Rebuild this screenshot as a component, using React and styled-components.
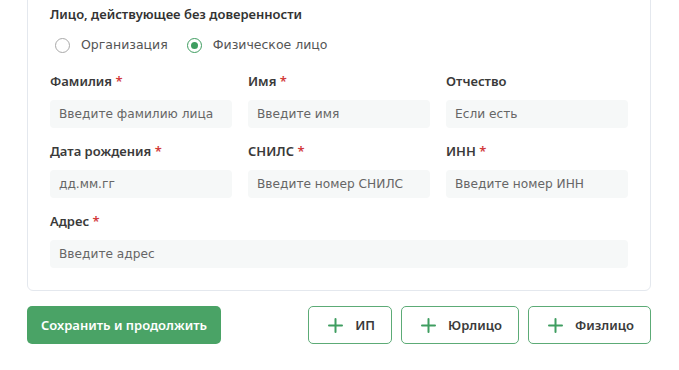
import React, { useState } from "react";
import styled, { createGlobalStyle } from "styled-components";

const GlobalStyle = createGlobalStyle`
  body {
    margin: 0;
    background: #fff;
    font-family: "DejaVu Sans", "Noto Sans", sans-serif;
    color: #333;
    overflow: hidden;
  }
  * { box-sizing: border-box; }
`;

const strong = `"Noto Sans", "DejaVu Sans", sans-serif`;

const Page = styled.main`
  padding: 0 28px 0 27px;
`;

const Card = styled.section`
  margin-top: -12px;
  border: 1px solid #e4e8ee;
  border-radius: 6px;
  padding: 16px 22px 22px 22px;
`;

const Title = styled.h3`
  margin: 0;
  font-family: ${strong};
  font-size: 13px;
  line-height: 18px;
  font-weight: 600;
  color: #333;
`;

const RadioRow = styled.div`
  display: flex;
  align-items: center;
  gap: 19px;
  margin: 13px 0 18px 5px;
`;

const RadioLabel = styled.label`
  display: flex;
  align-items: center;
  gap: 11px;
  font-size: 12.5px;
  line-height: 18px;
  color: #555;
  cursor: pointer;
`;

const Circle = styled.span`
  width: 15px;
  height: 15px;
  border-radius: 50%;
  border: 1.5px solid ${(p) => (p.$checked ? "#3f9d60" : "#a9a9a9")};
  display: flex;
  align-items: center;
  justify-content: center;
  &::after {
    content: "";
    width: 7px;
    height: 7px;
    border-radius: 50%;
    background: ${(p) => (p.$checked ? "#3f9d60" : "transparent")};
  }
`;

const Grid = styled.div`
  display: grid;
  grid-template-columns: repeat(3, 1fr);
  column-gap: 16px;
  row-gap: 14px;
`;

const Field = styled.div`
  display: flex;
  flex-direction: column;
  gap: 10px;
  grid-column: ${(p) => (p.$wide ? "1 / -1" : "auto")};
`;

const Label = styled.span`
  font-family: ${strong};
  font-size: 13px;
  line-height: 18px;
  font-weight: 600;
  color: #3a3a3a;
`;

const Star = styled.span`
  color: #d23a3a;
`;

const Input = styled.input`
  height: 28px;
  border: none;
  outline: none;
  border-radius: 4px;
  background: #f6f8f8;
  padding: 0 9px;
  font-family: inherit;
  font-size: 12.2px;
  color: #333;
  &::placeholder {
    color: #666;
  }
`;

const Actions = styled.div`
  display: flex;
  align-items: center;
  margin-top: 15px;
`;

const SaveButton = styled.button`
  height: 38px;
  padding: 0 14px;
  border: none;
  border-radius: 5px;
  background: #4aa366;
  color: #fff;
  font-family: ${strong};
  font-size: 13px;
  font-weight: 600;
  cursor: pointer;
`;

const AddGroup = styled.div`
  margin-left: auto;
  display: flex;
  gap: 9px;
`;

const AddButton = styled.button`
  height: 38px;
  padding: 0 16px 0 19px;
  display: flex;
  align-items: center;
  gap: 12px;
  border: 1px solid #5cab76;
  border-radius: 5px;
  background: #fff;
  color: #3a3a3a;
  font-family: ${strong};
  font-size: 13px;
  font-weight: 600;
  cursor: pointer;
`;

const Plus = () => (
  <svg width="15" height="15" viewBox="0 0 15 15" fill="none">
    <path d="M7.5 1v13M1 7.5h13" stroke="#3f9d60" strokeWidth="2" strokeLinecap="round" />
  </svg>
);

const fields = [
  { label: "Фамилия", required: true, placeholder: "Введите фамилию лица" },
  { label: "Имя", required: true, placeholder: "Введите имя" },
  { label: "Отчество", placeholder: "Если есть" },
  { label: "Дата рождения", required: true, placeholder: "дд.мм.гг" },
  { label: "СНИЛС", required: true, placeholder: "Введите номер СНИЛС" },
  { label: "ИНН", required: true, placeholder: "Введите номер ИНН" },
  { label: "Адрес", required: true, placeholder: "Введите адрес", wide: true },
];

const App = () => {
  const [kind, setKind] = useState("person");
  return (
    <Page>
      <GlobalStyle />
      <Card>
        <Title>Лицо, действующее без доверенности</Title>
        <RadioRow>
          <RadioLabel onClick={() => setKind("org")}>
            <Circle $checked={kind === "org"} />
            Организация
          </RadioLabel>
          <RadioLabel onClick={() => setKind("person")}>
            <Circle $checked={kind === "person"} />
            Физическое лицо
          </RadioLabel>
        </RadioRow>
        <Grid>
          {fields.map((f) => (
            <Field key={f.label} $wide={f.wide}>
              <Label>
                {f.label}
                {f.required && <Star> *</Star>}
              </Label>
              <Input placeholder={f.placeholder} />
            </Field>
          ))}
        </Grid>
      </Card>
      <Actions>
        <SaveButton>Сохранить и продолжить</SaveButton>
        <AddGroup>
          <AddButton><Plus />ИП</AddButton>
          <AddButton><Plus />Юрлицо</AddButton>
          <AddButton><Plus />Физлицо</AddButton>
        </AddGroup>
      </Actions>
    </Page>
  );
};

export default App;
